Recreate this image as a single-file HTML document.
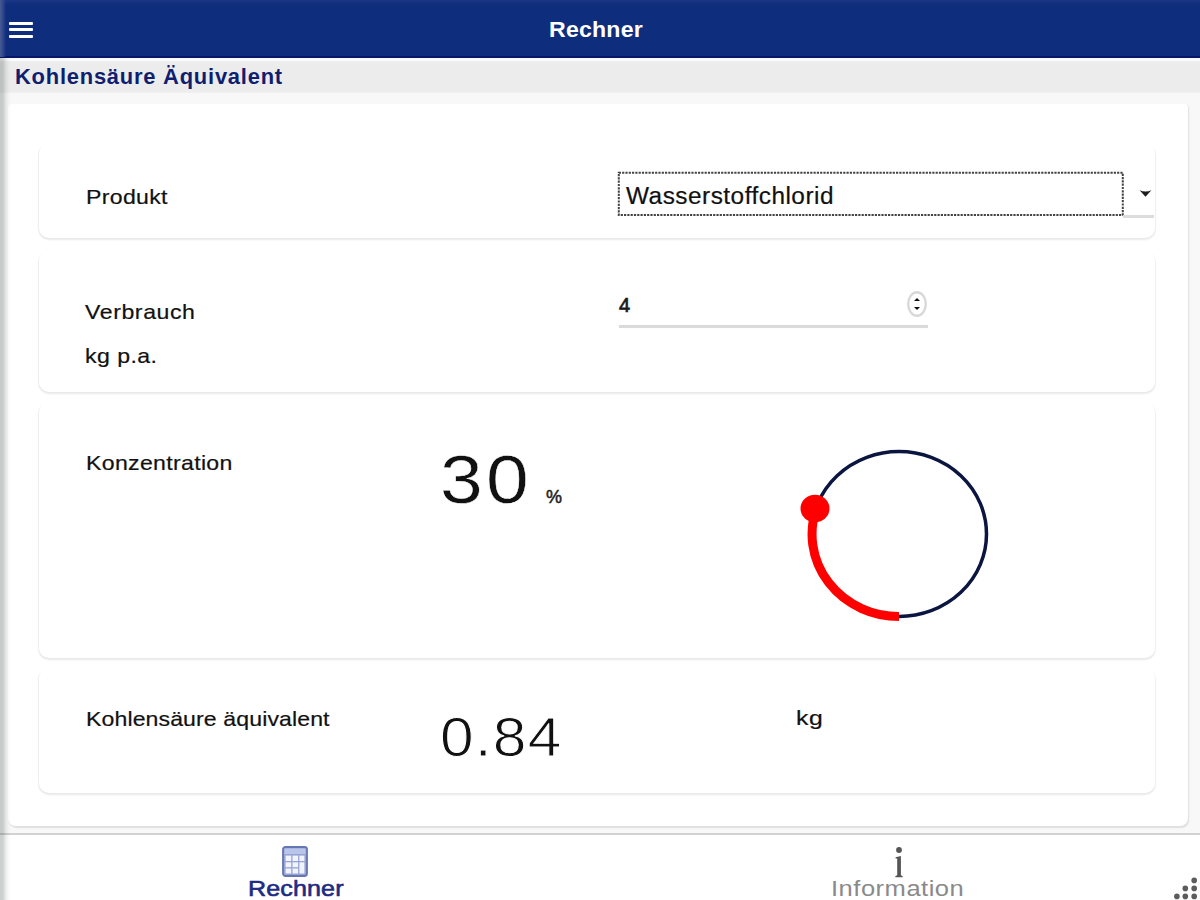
<!DOCTYPE html>
<html><head><meta charset="utf-8">
<style>
*{margin:0;padding:0;box-sizing:border-box}
html,body{width:1200px;height:900px;overflow:hidden;background:#f8f8f8;font-family:"Liberation Sans",sans-serif;color:#111}
.abs{position:absolute}
#hdr{left:0;top:0;width:1200px;height:57px;background:linear-gradient(180deg,#1a3787 0,#13307f 3px,#0f2d7d 6px)}
#hdrline{left:0;top:56px;width:1200px;height:2px;background:#06176a}
#hdrwhite{left:0;top:58px;width:1200px;height:3px;background:#fbfbff}
#sub{left:0;top:61px;width:1200px;height:32px;background:linear-gradient(180deg,#efefef 0,#ececec 3px,#ececec 29px,#f0f0f0 32px)}
#sub2{left:0;top:93px;width:1200px;height:11px;background:#f8f8f8}
#outer{left:8px;top:104px;width:1180px;height:722px;background:#fff;border-radius:4px 4px 8px 8px;box-shadow:1px 1.5px 1.5px rgba(0,0,0,0.1)}
.card{position:absolute;left:39px;width:1116px;background:#fff;border-radius:10px;box-shadow:0 2px 2px #e9e9e9, -1px 1px 1px #f0f0f0, 1px 1px 1px #f2f2f2}
.lbl{position:absolute;font-size:21px;letter-spacing:0.5px;color:#111;white-space:nowrap;transform:scaleX(1.1);transform-origin:0 0;-webkit-text-stroke:0.2px #111}
#leftstrip{left:0;top:58px;width:11px;height:842px;background:linear-gradient(90deg,rgba(40,50,45,0.24) 0,rgba(40,50,45,0.22) 3px,rgba(40,50,45,0.09) 6px,rgba(40,50,45,0.03) 8.5px,rgba(40,50,45,0) 11px)}
#leftstripH{left:0;top:0;width:6px;height:57px;background:linear-gradient(90deg,#475a92 0,#2f468a 3px,rgba(15,45,125,0) 6px)}
#tabbar{left:0;top:833px;width:1200px;height:67px;background:#fff;border-top:2px solid #d2d2d2}
</style></head>
<body>
<div id="hdr" class="abs"></div>
<div id="hdrline" class="abs"></div>
<div id="hdrwhite" class="abs"></div>
<div id="leftstripH" class="abs"></div>
<!-- hamburger -->
<div class="abs" style="left:9px;top:21.5px;width:24px;height:3.5px;background:#fff;border-radius:1px"></div>
<div class="abs" style="left:9px;top:28px;width:24px;height:3px;background:#fff;border-radius:1px"></div>
<div class="abs" style="left:9px;top:35px;width:24px;height:3px;background:#fff;border-radius:1px"></div>
<div class="abs" style="left:549px;top:17px;font-size:22px;font-weight:bold;color:#fff;letter-spacing:0.2px;white-space:nowrap;transform:scaleX(1.05);transform-origin:0 0">Rechner</div>

<div id="sub" class="abs"></div>
<div id="sub2" class="abs"></div>
<div class="abs" style="left:15px;top:64.5px;font-size:21.5px;font-weight:bold;color:#101e70;letter-spacing:0.75px;white-space:nowrap;transform:scaleX(1.02);transform-origin:0 0">Kohlensäure Äquivalent</div>

<div id="outer" class="abs"></div>

<!-- card 1 -->
<div class="card" style="top:143px;height:95px"></div>
<div class="lbl" style="left:86px;top:185px;letter-spacing:0.29px">Produkt</div>
<svg class="abs" style="left:617px;top:171px" width="508" height="46"><rect x="1.8" y="1.8" width="504" height="42.2" fill="none" stroke="#444" stroke-width="2" stroke-dasharray="2.2 1.1"/></svg>
<div class="abs" style="left:626px;top:182.5px;font-size:23px;letter-spacing:0.46px;color:#111;white-space:nowrap;transform:scaleX(1.06);transform-origin:0 0;-webkit-text-stroke:0.2px #111">Wasserstoffchlorid</div>
<div class="abs" style="left:1123px;top:215px;width:31px;height:3px;background:#dcdcdc"></div>
<svg class="abs" style="left:1138px;top:187px" width="16" height="12"><path d="M1.6 3.2 Q7.5 5.6 13.4 3.2 L7.5 9.8 Z" fill="#1e1e1e"/></svg>

<!-- card 2 -->
<div class="card" style="top:251px;height:141px"></div>
<div class="lbl" style="left:85px;top:299.5px;letter-spacing:0.53px">Verbrauch</div>
<div class="lbl" style="left:85px;top:344px;letter-spacing:0.4px">kg p.a.</div>
<div class="abs" style="left:619px;top:294px;font-size:20px;color:#1a1a1a;-webkit-text-stroke:0.7px #1a1a1a">4</div>
<div class="abs" style="left:618.5px;top:324.5px;width:309px;height:3.5px;background:#dadada;box-shadow:0 0 1px #e6e6e6"></div>
<svg class="abs" style="left:906px;top:290px" width="22" height="28">
<ellipse cx="11" cy="14" rx="8.8" ry="11.8" fill="#fff" stroke="#d8d8d8" stroke-width="2.4"/>
<path d="M8 11 L11 8 L14 11 Z" fill="#111"/><path d="M8 17 L11 20 L14 17 Z" fill="#111"/>
</svg>

<!-- card 3 -->
<div class="card" style="top:402px;height:256px"></div>
<div class="lbl" style="left:86px;top:451px;letter-spacing:0.29px">Konzentration</div>
<div class="abs" style="left:440px;top:440px;font-size:68px;letter-spacing:3px;color:#111;white-space:nowrap;transform:scaleX(1.13);transform-origin:0 0;-webkit-text-stroke:0.5px #fff">30</div>
<div class="abs" style="left:546px;top:487px;font-size:18px;color:#222;-webkit-text-stroke:0.5px #222">%</div>
<svg class="abs" style="left:780px;top:430px" width="230" height="210">
<ellipse cx="119" cy="104" rx="87.5" ry="82.5" fill="none" stroke="#0b1640" stroke-width="3.5"/>
</svg>

<!-- card 4 -->
<div class="card" style="top:668px;height:125px"></div>
<div class="lbl" style="left:86px;top:706.5px;letter-spacing:0.09px">Kohlensäure äquivalent</div>
<div class="abs" style="left:440px;top:704px;font-size:56px;letter-spacing:1.1px;color:#111;white-space:nowrap;-webkit-text-stroke:1px #fff;transform:scaleX(1.08);transform-origin:0 0">0.84</div>
<div class="lbl" style="left:796px;top:706px;letter-spacing:0.5px;transform:scaleX(1.18)">kg</div>

<!-- tab bar -->
<div id="tabbar" class="abs"></div>
<div class="abs" style="left:248px;top:876px;font-size:22px;color:#1d2b82;letter-spacing:0.1px;white-space:nowrap;transform:scaleX(1.14);transform-origin:0 0;-webkit-text-stroke:0.6px #1d2b82">Rechner</div>
<div class="abs" style="left:831px;top:876px;font-size:22px;color:#8a8a8a;letter-spacing:0.44px;white-space:nowrap;transform:scaleX(1.16);transform-origin:0 0">Information</div>


<svg class="abs" style="left:780px;top:430px" width="230" height="210">
<path d="M119 186.5 A87 82.3 0 0 1 36.3 78.8" fill="none" stroke="#ff0000" stroke-width="9"/>
<ellipse cx="35" cy="78.5" rx="14.5" ry="13.8" fill="#ff0000"/>
</svg>
<!-- calculator icon -->
<svg class="abs" style="left:282px;top:846px" width="26" height="31">
<rect x="1" y="1" width="24" height="29" rx="2.5" fill="#98a5d4" stroke="#6676b0" stroke-width="1.8"/>
<rect x="2.5" y="2.5" width="21" height="5.5" fill="#b9c6ea"/>
<g fill="#f1f4fd">
<rect x="3.6" y="9.6" width="5.6" height="5.4"/><rect x="10.5" y="9.6" width="5.6" height="5.4"/><rect x="17.4" y="9.6" width="5" height="5.4"/>
<rect x="3.6" y="16.3" width="5.6" height="4.9"/><rect x="10.5" y="16.3" width="5.6" height="4.9"/><rect x="17.4" y="16.3" width="5" height="11.2"/>
<rect x="3.6" y="22.5" width="5.6" height="5"/><rect x="10.5" y="22.5" width="5.6" height="5"/>
</g>
</svg>
<!-- info icon -->
<svg class="abs" style="left:888px;top:845px" width="22" height="34">
<circle cx="11" cy="5" r="2.9" fill="#555"/>
<path d="M7.6 12.2 L12.9 11 L12.9 30.2 L14.6 31 L14.6 32.2 L7.4 32.2 L7.4 31 L9.2 30.2 L9.2 13.6 L7.6 13.6 Z" fill="#555"/>
</svg>
<!-- resize grip -->
<svg class="abs" style="left:1170px;top:874px" width="30" height="26">
<g fill="#5c5c5c">
<circle cx="24.2" cy="6.4" r="2.8"/>
<circle cx="15.3" cy="14.4" r="2.8"/><circle cx="24.2" cy="14.4" r="2.8"/>
<circle cx="6.9" cy="22.4" r="2.8"/><circle cx="15.3" cy="22.4" r="2.8"/><circle cx="24.2" cy="22.4" r="2.8"/>
</g>
</svg>
<div id="leftstrip" class="abs"></div>
</body></html>
